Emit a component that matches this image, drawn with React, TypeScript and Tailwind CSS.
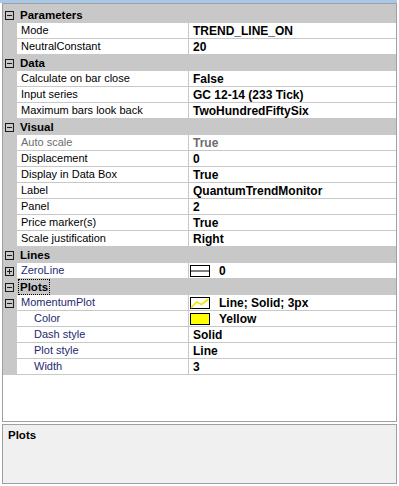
import React from 'react';

type Swatch = 'line' | 'plot' | 'yellow';

type Row =
  | { kind: 'cat'; label: string; focus?: boolean }
  | {
      kind: 'prop';
      label: string;
      value: string;
      sub?: boolean;
      expander?: 'plus' | 'minus';
      disabled?: boolean;
      swatch?: Swatch;
    };

const rows: Row[] = [
  { kind: 'cat', label: 'Parameters' },
  { kind: 'prop', label: 'Mode', value: 'TREND_LINE_ON' },
  { kind: 'prop', label: 'NeutralConstant', value: '20' },
  { kind: 'cat', label: 'Data' },
  { kind: 'prop', label: 'Calculate on bar close', value: 'False' },
  { kind: 'prop', label: 'Input series', value: 'GC 12-14 (233 Tick)' },
  { kind: 'prop', label: 'Maximum bars look back', value: 'TwoHundredFiftySix' },
  { kind: 'cat', label: 'Visual' },
  { kind: 'prop', label: 'Auto scale', value: 'True', disabled: true },
  { kind: 'prop', label: 'Displacement', value: '0' },
  { kind: 'prop', label: 'Display in Data Box', value: 'True' },
  { kind: 'prop', label: 'Label', value: 'QuantumTrendMonitor' },
  { kind: 'prop', label: 'Panel', value: '2' },
  { kind: 'prop', label: 'Price marker(s)', value: 'True' },
  { kind: 'prop', label: 'Scale justification', value: 'Right' },
  { kind: 'cat', label: 'Lines' },
  { kind: 'prop', label: 'ZeroLine', value: '0', expander: 'plus', swatch: 'line' },
  { kind: 'cat', label: 'Plots', focus: true },
  { kind: 'prop', label: 'MomentumPlot', value: 'Line; Solid; 3px', expander: 'minus', swatch: 'plot' },
  { kind: 'prop', label: 'Color', value: 'Yellow', sub: true, swatch: 'yellow' },
  { kind: 'prop', label: 'Dash style', value: 'Solid', sub: true },
  { kind: 'prop', label: 'Plot style', value: 'Line', sub: true },
  { kind: 'prop', label: 'Width', value: '3', sub: true },
];

const Expander = ({ plus }: { plus?: boolean }) => (
  <svg width="9" height="9" viewBox="0 0 9 9" className="shrink-0">
    <rect x="0.5" y="0.5" width="8" height="8" fill="none" stroke="#1a1a1a" />
    <line x1="2" y1="4.5" x2="7" y2="4.5" stroke="#1a1a1a" />
    {plus && <line x1="4.5" y1="2" x2="4.5" y2="7" stroke="#1a1a1a" />}
  </svg>
);

const SwatchIcon = ({ type }: { type: Swatch }) => (
  <svg width="20" height="12" viewBox="0 0 20 12" className="shrink-0">
    <rect
      x="0.5"
      y="0.5"
      width="19"
      height="11"
      fill={type === 'yellow' ? '#ffff00' : '#ffffff'}
      stroke="#000"
    />
    {type === 'line' && <line x1="1" y1="6" x2="19" y2="6" stroke="#000" />}
    {type === 'plot' && (
      <polyline
        points="1,11 6.5,5 11.5,7.5 18.5,2"
        fill="none"
        stroke="#f2e600"
        strokeWidth="1.6"
      />
    )}
  </svg>
);

const GridRow = ({ row }: { row: Row }) => {
  if (row.kind === 'cat') {
    return (
      <div className="flex h-[16px] items-center bg-[#c8c8c8]">
        <div className="flex w-[14px] shrink-0 pl-[2px]">
          <Expander />
        </div>
        <div className="pl-[2px]">
          <span
            className={`block px-[1px] leading-[14px] text-[11.5px] font-bold text-black ${
              row.focus ? 'outline outline-1 outline-dotted outline-black' : ''
            }`}
          >
            {row.label}
          </span>
        </div>
      </div>
    );
  }

  return (
    <div className="flex h-[16px]">
      <div className="flex w-[14px] shrink-0 items-center bg-[#c8c8c8] pl-[2px]">
        {row.expander && <Expander plus={row.expander === 'plus'} />}
      </div>
      <div
        className={`flex w-[172px] shrink-0 items-center border-b border-r border-[#c8c8c8] text-[11px] ${
          row.sub ? 'pl-[17px]' : 'pl-[4px]'
        } ${
          row.disabled
            ? 'text-[#6d6d6d]'
            : row.expander || row.sub
              ? 'text-[#1f2a6e]'
              : 'text-black'
        }`}
      >
        {row.label}
      </div>
      <div
        className={`flex flex-1 items-center border-b border-[#c8c8c8] text-[12px] font-bold ${
          row.swatch ? 'pl-[1px]' : 'pl-[4px]'
        } ${row.disabled ? 'text-[#6d6d6d]' : 'text-black'}`}
      >
        {row.swatch && <SwatchIcon type={row.swatch} />}
        <span className={row.swatch ? 'pl-[9px]' : ''}>{row.value}</span>
      </div>
    </div>
  );
};

export default function App() {
  return (
    <div className="h-[486px] w-[399px] bg-white font-['Liberation_Sans',Arial,sans-serif] leading-none">
      <div className="h-[3px] w-[397px] bg-[#a9c8e8]" />

      {/* Property grid */}
      <div className="ml-[2px] h-[419px] w-[395px] border border-[#a0a0a0] bg-white">
        <div className="h-[3px] bg-[#c8c8c8]" />
        {rows.map((row, i) => (
          <GridRow key={i} row={row} />
        ))}
      </div>

      {/* Help panel */}
      <div className="ml-[2px] mt-[2px] h-[60px] w-[395px] border border-[#a0a0a0] bg-[#f0f0f0] pl-[5px] pt-[1px]">
        <span className="text-[11.5px] font-bold text-black">Plots</span>
      </div>
    </div>
  );
}
